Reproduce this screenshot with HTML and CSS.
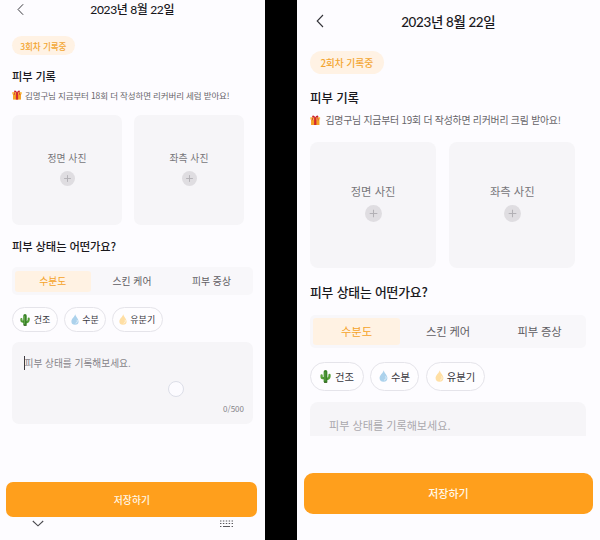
FILE: index.html
```
<!DOCTYPE html>
<html lang="ko">
<head>
<meta charset="utf-8">
<title>피부 기록</title>
<link rel="stylesheet" href="styles.css">
</head>
<body>
<svg width="0" height="0" class="defs">
  <symbol id="back" viewBox="0 0 8 14"><path d="M7 1 1.2 7 7 13" fill="none" stroke="#333338" stroke-width="1.1"/></symbol>
  <symbol id="gift" viewBox="0 0 10 10"><path d="M1 4h8v5.6H1z" fill="#f5a426"/><path d="M.3 2.1h9.4v2.2H.3z" fill="#fabb42"/><path d="M3.9 2.2h2.2v7.4H3.9z" fill="#d3292f"/><path d="M5 2.4C3.8 2.6 1.7 2.3 2.1 1 2.6-.2 4.5.7 5 2.4 5.5.7 7.4-.2 7.9 1 8.3 2.3 6.2 2.6 5 2.4Z" fill="#c9202c"/><path d="M2.7 2.4 2.1 5M7.3 2.4 7.9 5" stroke="#d3292f" stroke-width=".8"/></symbol>
  <symbol id="plus" viewBox="0 0 16 16"><circle cx="8" cy="8" r="8" fill="#dfdde1"/><path d="M8 4.4v7.2M4.4 8h7.2" stroke="#b2b0b5" stroke-width="1"/></symbol>
  <symbol id="cactus" viewBox="0 0 10 12"><path d="M5 2v8M1.4 5v1.2Q1.4 7.6 3 7.6H5M8.7 4.5v1.3Q8.7 8.4 5 8.4" fill="none" stroke="#529e35" stroke-width="2.1" stroke-linecap="round"/><path d="M5 1.7v8.6" stroke="#398229" stroke-width="3.4" stroke-linecap="round"/><path d="M4.5 2v8M1.3 5v1" stroke="#79b957" stroke-width=".6"/><path d="M3.8 11.5h2.8" stroke="#45662f" stroke-width=".8"/></symbol>
  <symbol id="drop" viewBox="0 0 8 11"><path d="M4.2.3C3.7 2.8.4 4.8.4 7.4a3.6 3.3 0 0 0 7.2 0C7.6 4.8 4.6 2.8 4.2.3Z" fill="currentColor"/><path d="M6 5.8c.8 1.6.2 3-1.4 3.5" fill="none" stroke="#fff" stroke-opacity=".65" stroke-width=".9"/></symbol>
</svg>

<main class="screens">
  <section class="phone small">
    <header class="bar"><svg class="back"><use href="#back"/></svg><h1 class="title">2023년 8월 22일</h1></header>
    <div class="body">
      <span class="badge">3회차 기록중</span>
      <h2 class="heading">피부 기록</h2>
      <p class="notice"><svg class="gift"><use href="#gift"/></svg><span>김명구님 지금부터 18회 더 작성하면 리커버리 세럼 받아요!</span></p>
      <div class="photos">
        <div class="photo"><span>정면 사진</span><svg class="plus"><use href="#plus"/></svg></div>
        <div class="photo"><span>좌측 사진</span><svg class="plus"><use href="#plus"/></svg></div>
      </div>
      <h2 class="question">피부 상태는 어떤가요?</h2>
      <nav class="tabs"><span class="tab active">수분도</span><span class="tab">스킨 케어</span><span class="tab">피부 증상</span></nav>
      <div class="chips">
        <span class="chip dry"><svg class="cactus"><use href="#cactus"/></svg><b>건조</b></span>
        <span class="chip moist"><svg class="drop blue"><use href="#drop"/></svg><b>수분</b></span>
        <span class="chip oily"><svg class="drop yellow"><use href="#drop"/></svg><b>유분기</b></span>
      </div>
      <div class="memo"><i class="caret"></i><span class="hint">피부 상태를 기록해보세요.</span><i class="touch"></i><span class="count">0/500</span></div>
    </div>
    <div class="save">저장하기</div>
    <footer class="keys">
      <svg width="12" height="7" viewBox="0 0 12 7"><path d="M.8 1 6 5.8 11.2 1" fill="none" stroke="#4a494e" stroke-width="1.1"/></svg>
      <svg width="13" height="8" viewBox="0 0 13 8"><path d="M0 1h13M0 3.5h13" stroke="#59585d" stroke-width="1.2" stroke-dasharray="1.4 1.5"/><path d="M0 6.5h1.4M3 6.5h7M11.6 6.5H13" stroke="#59585d" stroke-width="1.2"/></svg>
    </footer>
  </section>

  <section class="phone large">
    <header class="bar"><svg class="back"><use href="#back"/></svg><h1 class="title">2023년 8월 22일</h1></header>
    <div class="body">
      <span class="badge">2회차 기록중</span>
      <h2 class="heading">피부 기록</h2>
      <p class="notice"><svg class="gift"><use href="#gift"/></svg><span>김명구님 지금부터 19회 더 작성하면 리커버리 크림 받아요!</span></p>
      <div class="photos">
        <div class="photo"><span>정면 사진</span><svg class="plus"><use href="#plus"/></svg></div>
        <div class="photo"><span>좌측 사진</span><svg class="plus"><use href="#plus"/></svg></div>
      </div>
      <h2 class="question">피부 상태는 어떤가요?</h2>
      <nav class="tabs"><span class="tab active">수분도</span><span class="tab">스킨 케어</span><span class="tab">피부 증상</span></nav>
      <div class="chips">
        <span class="chip dry"><svg class="cactus"><use href="#cactus"/></svg><b>건조</b></span>
        <span class="chip moist"><svg class="drop blue"><use href="#drop"/></svg><b>수분</b></span>
        <span class="chip oily"><svg class="drop yellow"><use href="#drop"/></svg><b>유분기</b></span>
      </div>
      <div class="memo"><span class="hint">피부 상태를 기록해보세요.</span></div>
    </div>
    <div class="save">저장하기</div>
  </section>
</main>
</body>
</html>
```
FILE: styles.css
```
* { box-sizing: border-box; }
body { margin: 0; background: #000; font-family: "Noto Sans CJK KR", sans-serif; color: #19181c; overflow: hidden; }
h1, h2, p { margin: 0; font-weight: 500; }
b { font-weight: 400; }
svg { display: block; flex: none; }
.defs { position: absolute; }
.screens { display: flex; justify-content: space-between; width: 600px; height: 540px; }
.phone { display: flex; flex-direction: column; background: #fdfcff; white-space: nowrap; overflow: hidden; }
.bar { display: grid; align-items: center; flex: none; }
.bar > * { grid-area: 1 / 1; }
.title { text-align: center; line-height: 20px; font-family: Lato, "Noto Sans CJK KR", sans-serif; }
.body { display: flex; flex-direction: column; flex: none; }
.badge { display: flex; align-items: center; justify-content: center; align-self: flex-start; border-radius: 20px; background: #fff2e4; color: #f3a632; font-weight: 500; }
.heading, .question { line-height: 20px; }
.notice { display: flex; align-items: center; height: 14px; color: #67656a; font-weight: 400; }
.photos { display: flex; }
.photo { display: flex; flex-direction: column; align-items: center; background: #f6f5f8; color: #77757a; }
.photo span { line-height: 16px; }
.tabs { display: grid; border-radius: 5px; background: #f8f7fa; color: #5f5d62; }
.tab { display: flex; align-items: center; justify-content: center; }
.tab.active { background: #fff2e3; color: #f5a329; border-radius: 3px; }
.chips { display: flex; }
.chip { display: flex; align-items: center; justify-content: center; border: 1px solid #e5e4ea; border-radius: 20px; background: #fefdff; color: #39373d; }
.blue { color: #acd2ec; }
.yellow { color: #ffdfa4; }
.memo { position: relative; display: flex; flex-direction: column; background: #f6f5f8; }
.hint { line-height: 20px; }
.save { display: flex; align-items: center; justify-content: center; flex: none; background: #ff9f1c; color: #fff8e8; font-weight: 500; }

.small { width: 264.5px; }
.small .bar { height: 20px; }
.small .back { width: 7px; height: 13px; margin: -1px 0 0 17px; }
.small .title { font-size: 12px; letter-spacing: -0.33px; }
.small .body { margin: 16px 12px 0; }
.small .badge { width: 62.5px; height: 19px; font-size: 8.6px; letter-spacing: -0.1px; }
.small .heading { margin-top: 11px; font-size: 11.2px; letter-spacing: -0.1px; }
.small .notice { margin-top: 2px; font-size: 8.5px; letter-spacing: -0.13px; }
.small .gift { width: 10px; height: 10px; margin-right: 3px; }
.small .photos { margin-top: 13px; gap: 12px; }
.small .photo { width: 110px; height: 110px; padding-top: 35px; border-radius: 7px; font-size: 9.8px; }
.small .plus { width: 15px; height: 15px; margin-top: 4.5px; }
.small .question { margin-top: 11px; font-size: 11.3px; letter-spacing: -0.12px; }
.small .tabs { width: 240.5px; height: 28px; margin-top: 11px; padding: 3.5px 2.5px 3px; grid-template-columns: 76.5px 82px 77px; font-size: 9.8px; }
.small .chips { margin-top: 12px; gap: 6px; }
.small .chip { height: 25px; font-size: 9px; }
.small .dry { width: 46px; gap: 4px; }
.small .moist { width: 42px; gap: 3px; }
.small .oily { width: 50.5px; gap: 3px; }
.small .cactus { width: 10px; height: 12px; }
.small .drop { width: 8px; height: 11px; }
.small .memo { width: 240.5px; height: 82px; margin-top: 10px; padding: 11px 8.5px 0 12.5px; border-radius: 7px; color: #858388; font-size: 9.7px; }
.caret { position: absolute; left: 12px; top: 14px; width: 1px; height: 14px; background: #3d3b40; }
.touch { position: absolute; left: 155.5px; top: 39px; width: 16px; height: 16px; border: 1px solid #dcdee8; border-radius: 50%; background: #fcfbff; }
.count { align-self: flex-end; margin-top: 28px; line-height: 16px; font-size: 8px; }
.small .save { width: 251px; height: 35px; margin: 58px 0 0 6.4px; border-radius: 7px; font-size: 9.8px; }
.keys { display: flex; justify-content: space-between; align-items: center; padding: 2.5px 32px 0; }

.large { width: 303.5px; }
.large .bar { height: 44px; }
.large .back { width: 8px; height: 14px; margin: -3px 0 0 19px; }
.large .title { font-size: 13.4px; letter-spacing: -0.33px; }
.large .body { margin: 7px 13.5px 0; }
.large .badge { width: 73.5px; height: 23px; font-size: 9.8px; letter-spacing: -0.1px; }
.large .heading { margin-top: 14px; font-size: 12.5px; letter-spacing: -0.1px; }
.large .notice { margin-top: 5px; font-size: 9.9px; letter-spacing: -0.22px; }
.large .gift { width: 10.5px; height: 10.5px; margin-right: 5px; }
.large .photos { margin-top: 15px; gap: 13px; }
.large .photo { width: 126.2px; height: 125.5px; padding-top: 40.5px; border-radius: 8px; font-size: 11.3px; }
.large .plus { width: 17px; height: 17px; margin-top: 6.5px; }
.large .question { margin-top: 14.5px; font-size: 12.8px; letter-spacing: -0.15px; }
.large .tabs { width: 276px; height: 33px; margin-top: 12.5px; padding: 3px; grid-template-columns: 87px 96px 87px; font-size: 11.3px; letter-spacing: -0.1px; }
.large .chips { margin-top: 14px; gap: 6.5px; }
.large .chip { height: 29px; font-size: 10.3px; }
.large .dry { width: 53.5px; gap: 4.5px; }
.large .moist { width: 49px; gap: 3px; }
.large .oily { width: 59px; gap: 3px; }
.large .cactus { width: 11px; height: 13px; }
.large .drop { width: 9px; height: 12px; }
.large .memo { width: 276px; height: 34.5px; margin-top: 11px; padding: 13px 19px 0; border-radius: 8px 8px 0 0; color: #aaa8ad; font-size: 11.1px; }
.large .save { width: 289px; height: 41px; margin: 37px 0 0 7.5px; padding-bottom: 2px; border-radius: 9px; font-size: 11px; }
```
